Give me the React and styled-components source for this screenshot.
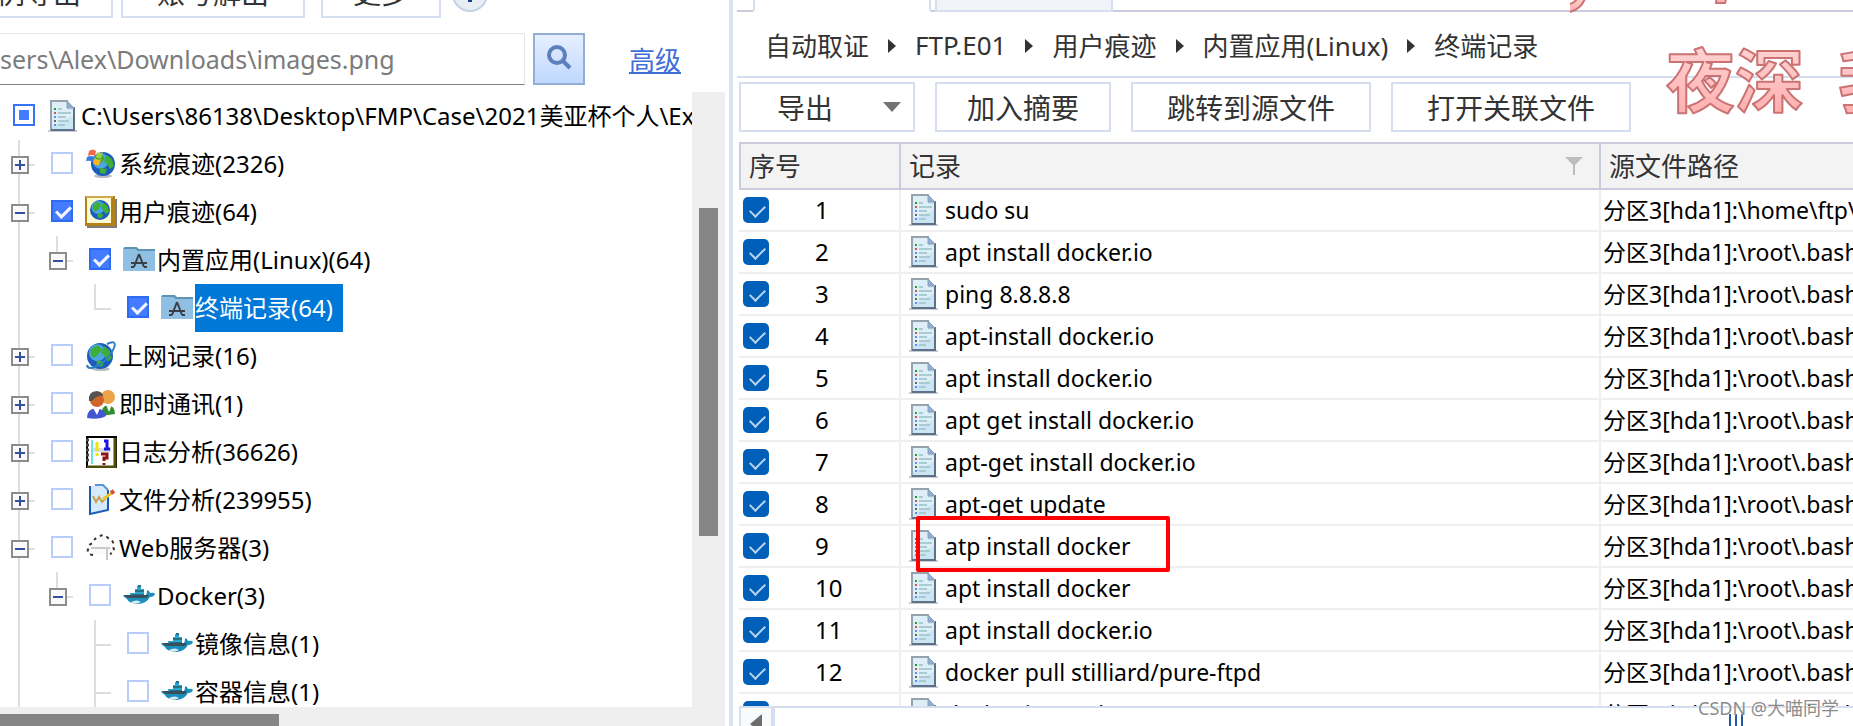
import { useState } from "react";
import styled, { createGlobalStyle, css } from "styled-components";

const tree = [
  { level: 0, label: "C:\\Users\\86138\\Desktop\\FMP\\Case\\2021美亚杯个人\\Ex", icon: "doc", state: "partial", cells: [] },
  { level: 1, label: "系统痕迹(2326)", icon: "windows", cells: ["plus"] },
  { level: 1, label: "用户痕迹(64)", icon: "user", state: "on", cells: ["minus"] },
  { level: 2, label: "内置应用(Linux)(64)", icon: "folder", state: "on", cells: ["line", "last-minus"] },
  { level: 3, label: "终端记录(64)", icon: "folder", state: "on", selected: true, cells: ["line", "", "end"] },
  { level: 1, label: "上网记录(16)", icon: "globe", cells: ["plus"] },
  { level: 1, label: "即时通讯(1)", icon: "people", cells: ["plus"] },
  { level: 1, label: "日志分析(36626)", icon: "log", cells: ["plus"] },
  { level: 1, label: "文件分析(239955)", icon: "file", cells: ["plus"] },
  { level: 1, label: "Web服务器(3)", icon: "cloud", cells: ["minus"] },
  { level: 2, label: "Docker(3)", icon: "docker", cells: ["line", "last-minus"] },
  { level: 3, label: "镜像信息(1)", icon: "docker", cells: ["line", "", "tee"] },
  { level: 3, label: "容器信息(1)", icon: "docker", cells: ["line", "", "tee"] },
];

const bash = "分区3[hda1]:\\root\\.bash_history";
const records = [
  { text: "sudo su", path: "分区3[hda1]:\\home\\ftp\\.bash_history" },
  { text: "apt install docker.io", path: bash },
  { text: "ping 8.8.8.8", path: bash },
  { text: "apt-install docker.io", path: bash },
  { text: "apt install docker.io", path: bash },
  { text: "apt get install docker.io", path: bash },
  { text: "apt-get install docker.io", path: bash },
  { text: "apt-get update", path: bash },
  { text: "atp install docker", path: bash, marked: true },
  { text: "apt install docker", path: bash },
  { text: "apt install docker.io", path: bash },
  { text: "docker pull stilliard/pure-ftpd", path: bash },
  { text: "docker image ls", path: bash },
];

const crumbs = ["自动取证", "FTP.E01", "用户痕迹", "内置应用(Linux)", "终端记录"];

function DocIcon() {
  return (
    <svg width="32" height="32" viewBox="0 0 32 32">
      <path d="M1 31H30" stroke="#c9ccd0" strokeWidth="2" />
      <path d="M4 1H21L27 8V31H4Z" fill="#cbe5f2" />
      <path d="M5 2H20V10H26V16L5 26Z" fill="#e2f1f8" opacity="0.8" />
      <path d="M4 31V1H21" fill="none" stroke="#96a2ad" strokeWidth="2" />
      <path d="M27 7V30H4" fill="none" stroke="#5d7288" strokeWidth="2" />
      <path d="M20 1V8H27Z" fill="#8fb0d6" stroke="#8ba0b5" />
      <path d="M11 9H15M11 13H24M11 17H19M11 21H22M11 25H18" stroke="#a9ccd2" strokeWidth="2" />
      <path d="M7 9H9" stroke="#22a022" strokeWidth="2" />
      <path d="M7 13H9" stroke="#cc5555" strokeWidth="2" />
      <path d="M7 17H9M7 25H9" stroke="#5a8cff" strokeWidth="2" />
      <path d="M7 21H9" stroke="#666" strokeWidth="2" />
    </svg>
  );
}

function Globe({ cx, cy, r }) {
  return (
    <g>
      <circle cx={cx} cy={cy} r={r} fill="#1c5cbc" />
      <circle cx={cx - r * 0.2} cy={cy - r * 0.25} r={r * 0.65} fill="#4ba6e2" />
      <path
        transform={`translate(${cx} ${cy}) scale(${r / 12})`}
        d="M-8 -7L-2 -10L2 -6L-2 -1L-6 2L-9 -2ZM4 -9L9 -5L11 2L7 5L4 0L1 -3ZM-3 4L4 5L2 10L-3 9Z"
        fill="#3fae38"
      />
    </g>
  );
}

function TreeIcon({ name }) {
  if (name === "doc") return <DocIcon />;
  return (
    <svg width="32" height="32" viewBox="0 0 32 32">
      {name === "windows" && (
        <>
          <ellipse cx="18" cy="28" rx="9" ry="2" fill="#b7bcc2" />
          <Globe cx={18} cy={16} r={12} />
          <path d="M4 3Q8 0 11 3L10 8Q7 6 3 8Z" fill="#ee6a4a" />
          <path d="M12 4Q15 6 18 4L16 10Q13 11 11 9Z" fill="#a5cf3c" />
          <path d="M2 9Q6 7 9 9L8 14Q5 12 1 13Z" fill="#3a7be0" />
          <path d="M10 10Q13 13 16 11L14 17Q11 18 8 15Z" fill="#ffb321" />
        </>
      )}
      {name === "user" && (
        <>
          <path d="M2 3H32V32H2Z" fill="#7d7d7d" />
          <path d="M0 0H30V30H0Z" fill="#b28219" />
          <path d="M2 2H26V27H2Z" fill="#fffbd0" />
          <path d="M1 1H28" stroke="#d0a850" strokeWidth="2" />
          <Globe cx={15} cy={14} r={10} />
        </>
      )}
      {name === "folder" && (
        <>
          <path d="M0 4H2V3H14L16 5H32V27H0Z" fill="#8fc0e4" />
          <path d="M1 4H13L15 6H32" fill="none" stroke="#5b93b0" strokeWidth="2" />
          <path d="M16 10L11 23M16 10L21 23M8 19H24" stroke="#3c3f44" strokeWidth="2" fill="none" />
          <path d="M8 23H11M21 23H24" stroke="#3c3f44" strokeWidth="2" />
        </>
      )}
      {name === "globe" && (
        <>
          <ellipse cx="16" cy="29" rx="9" ry="2" fill="#b7bcc2" />
          <Globe cx={15} cy={16} r={13} />
          <path d="M22 4Q32 -1 29 8Q25 18 14 25Q3 31 2 25" fill="none" stroke="#2a7fc4" strokeWidth="2" />
        </>
      )}
      {name === "people" && (
        <>
          <path d="M16 28Q16 18 23 17Q30 18 30 26Z" fill="#2f8d2b" />
          <path d="M21 17L24 24L27 17Z" fill="#f1f7ee" />
          <circle cx="23" cy="9" r="7" fill="#eda24a" />
          <path d="M2 30Q2 21 11 20Q20 21 21 28Q14 32 2 30Z" fill="#4257cf" />
          <path d="M8 20L12 27L15 20Z" fill="#fff" />
          <circle cx="12" cy="12" r="7" fill="#cf6428" />
          <path d="M4 13Q3 3 12 3Q18 4 18 8Q12 7 7 13Z" fill="#55524f" />
        </>
      )}
      {name === "log" && (
        <>
          <path d="M2 1H31V31H2Z" fill="#fff" stroke="#000" strokeWidth="2" />
          <path d="M30 2V31H2" fill="none" stroke="#4e4d09" strokeWidth="3" />
          <path d="M1 4H4M1 9H4M1 14H4M1 19H4M1 24H4" stroke="#444" strokeWidth="3" />
          <path d="M7 4V28" stroke="#6be3ea" strokeWidth="2" />
          <path d="M8 12H26V16H8Z" fill="#dcdcdc" />
          <path d="M12 6V15M12 17V20" stroke="#efe30a" strokeWidth="3" />
          <path d="M19 5H22V14M19 13H25" fill="none" stroke="#1717e4" strokeWidth="3" />
          <path d="M16 18H22V22H19V25M19 27V29" fill="none" stroke="#8c1414" strokeWidth="3" />
        </>
      )}
      {name === "file" && (
        <>
          <path d="M5 2L18 1L23 6V26L5 30Z" fill="#d5eafc" />
          <path d="M23 6V26L5 30V2" fill="none" stroke="#1e5bb6" strokeWidth="2" />
          <path d="M10 1H18L23 6" fill="none" stroke="#5d93d6" strokeWidth="2" />
          <path d="M8 12L11 18L14 13L17 18L21 14" fill="none" stroke="#c9a04a" strokeWidth="2" />
          <path d="M18 15L27 9" stroke="#efc62c" strokeWidth="3" />
          <path d="M26 9L29 7" stroke="#d94b3a" strokeWidth="4" />
        </>
      )}
      {name === "cloud" && (
        <>
          <path
            d="M8 23Q1 22 3 18Q2 13 8 11Q9 6 14 5Q18 1 23 6Q30 9 28 15Q31 20 25 22"
            fill="#fafafa"
            stroke="#333"
            strokeWidth="2"
            strokeDasharray="3 4"
          />
          <path d="M6 15H25V17H6ZM21 17H23V28H21Z" fill="#c9c9c9" />
        </>
      )}
      {name === "docker" && (
        <g transform="translate(0 4)">
          <path d="M7 9H12V5H14V2H18V5H21V13H7Z" fill="#2aa5cf" />
          <path d="M15 2H18M12 7H21M9 11H21" stroke="#2b6f86" strokeWidth="2" />
          <path d="M0 12H22Q24 11 24 6Q27 7 27 9Q31 8 32 10Q31 13 27 13Q23 20 15 20Q5 19 4 15Z" fill="#1b8fba" />
          <path d="M0 11H26L24 14H5Z" fill="#36515c" />
          <path d="M8 18Q12 21 18 18Q14 15 8 18Z" fill="#d5eef6" />
        </g>
      )}
    </svg>
  );
}

function TreeRow({ node }) {
  const [open, setOpen] = useState(true);
  return (
    <Row>
      {node.cells.map((kind, i) => (
        <Cell key={i} $kind={kind}>
          {(kind.includes("plus") || kind.includes("minus")) && (
            <Expander
              type="button"
              aria-label="展开"
              aria-expanded={open}
              $plus={kind === "plus"}
              onClick={() => setOpen(!open)}
            />
          )}
        </Cell>
      ))}
      <TreeLabel>
        <TreeCheck type="checkbox" defaultChecked={node.state === "on"} $partial={node.state === "partial"} />
        <TreeIcon name={node.icon} />
        <NodeText $selected={node.selected}>{node.label}</NodeText>
      </TreeLabel>
    </Row>
  );
}

export default function App() {
  return (
    <>
      <Global />
      <Page>
        <Side>
          <SideTools>
            <CutButton type="button" $size="first">案例导出</CutButton>
            <CutButton type="button" $size="wide">账号解出</CutButton>
            <CutButton type="button">更多</CutButton>
            <Help type="button" aria-label="帮助">
              <svg width="36" height="36" viewBox="0 0 36 36"><path d="M16 8H20V26H16Z" fill="#17408b" /></svg>
            </Help>
          </SideTools>
          <Search>
            <PathInput aria-label="路径" defaultValue="sers\Alex\Downloads\images.png" />
            <SearchButton type="button" aria-label="搜索">
              <svg width="28" height="28" viewBox="0 0 28 28" fill="none" stroke="#5b80bb">
                <circle cx="12" cy="10" r="8" strokeWidth="4" />
                <path d="M18 16L25 23" strokeWidth="4" />
              </svg>
            </SearchButton>
            <Advanced href="#advanced">高级</Advanced>
          </Search>
          <TreeArea>
            <Tree>
              {tree.map((node) => (
                <TreeRow key={node.label} node={node} />
              ))}
            </Tree>
            <TrackV><ThumbV /></TrackV>
          </TreeArea>
          <TrackH><ThumbH /></TrackH>
        </Side>

        <Main>
          <Tabs>
            <TabEdge />
            <Tab type="button" aria-label="终端记录" $active />
            <TabEdge />
            <Tab type="button" aria-label="其他" />
            <TabFill />
          </Tabs>
          <Crumbs>
            {crumbs.map((c, i) => (
              <Crumb key={c}>
                {i > 0 && <svg width="8" height="14" viewBox="0 0 8 14"><path d="M0 0L8 7L0 14Z" fill="#333" /></svg>}
                <span>{c}</span>
              </Crumb>
            ))}
          </Crumbs>
          <Actions>
            <ActionButton type="button" $menu>
              导出
              <svg width="18" height="10" viewBox="0 0 18 10"><path d="M0 0H18L9 10Z" fill="#737373" /></svg>
            </ActionButton>
            <ActionButton type="button">加入摘要</ActionButton>
            <ActionButton type="button" $wide>跳转到源文件</ActionButton>
            <ActionButton type="button" $wide>打开关联文件</ActionButton>
          </Actions>
          <Grid>
            <Table>
              <colgroup>
                <NumCol />
                <TextCol />
                <col />
              </colgroup>
              <thead>
                <tr>
                  <th>序号</th>
                  <th>
                    <HeadCell>
                      记录
                      <svg width="18" height="18" viewBox="0 0 18 18"><path d="M0 0H18L10 8V18H8V8Z" fill="#bdbdbd" /></svg>
                    </HeadCell>
                  </th>
                  <th>源文件路径</th>
                </tr>
              </thead>
              <tbody>
                {records.map((r, i) => (
                  <tr key={i}>
                    <td>
                      <NumCell>
                        <RowCheck type="checkbox" defaultChecked />
                        {i + 1}
                      </NumCell>
                    </td>
                    <td>
                      <RecordCell>
                        <DocIcon />
                        {r.text}
                        {r.marked && <Mark />}
                      </RecordCell>
                    </td>
                    <td>{r.path}</td>
                  </tr>
                ))}
              </tbody>
            </Table>
          </Grid>
          <BottomBar>
            <ScrollLeft type="button" aria-label="向左">
              <svg width="12" height="20" viewBox="0 0 12 20"><path d="M12 0V20L0 10Z" fill="#6d6d6d" /></svg>
            </ScrollLeft>
            <Grip><i /><i /><i /></Grip>
          </BottomBar>
        </Main>
        <Lyric aria-hidden="true">
          <svg width="283" height="130" viewBox="0 0 283 130">
            <defs>
              <linearGradient id="pink" x1="0" y1="0" x2="0" y2="1">
                <stop offset="0" stopColor="#ffd9d9" />
                <stop offset="1" stopColor="#ffa9a9" />
              </linearGradient>
            </defs>
            <g fill="url(#pink)" stroke="#cb7272" strokeWidth="2">
              <path d="M0 4Q6 2 9 -4H16Q12 9 0 12" />
              <path d="M147 -4L146 3H155L157 -4Z" />
              <text x="96" y="107">夜深</text>
              <text x="268" y="107">我</text>
            </g>
          </svg>
        </Lyric>
        <Credit>CSDN @大喵同学</Credit>
      </Page>
    </>
  );
}

const Global = createGlobalStyle`
  * { box-sizing: border-box; }
  body {
    margin: 0;
    background: #fff;
    font-family: "Noto Sans", "Noto Sans CJK SC", sans-serif;
    font-size: 24px;
    color: #000;
  }
  button, input { font-family: inherit; margin: 0; padding: 0; }
  svg { flex: none; display: block; }
`;

const Page = styled.div`
  position: relative;
  display: grid;
  grid-template-columns: 729fr 1124fr;
  height: 100vh;
  overflow: hidden;
`;

const Side = styled.aside`
  display: flex;
  flex-direction: column;
  min-width: 0;
  min-height: 0;
`;

const SideTools = styled.div`
  display: flex;
  align-items: flex-end;
  height: 18px;
  flex: none;
`;

const CutButton = styled.button`
  flex: none;
  width: 120px;
  height: 50px;
  margin-right: 16px;
  border: 2px solid #d6dff0;
  background: #fff;
  font-size: 28px;
  line-height: 44px;
  color: #333;
  ${({ $size }) => $size === "wide" && css`width: 184px;`}
  ${({ $size }) => $size === "first" && css`
    width: 176px;
    margin-left: -63px;
    margin-right: 8px;
  `}
`;

const Help = styled.button`
  align-self: flex-end;
  width: 36px;
  height: 36px;
  margin: 0 0 6px -5px;
  border: 2px solid #c3d3e6;
  border-radius: 50%;
  background: #e9eef5;
  display: flex;
  align-items: center;
  justify-content: center;
`;

const Search = styled.div`
  display: flex;
  align-items: center;
  height: 68px;
  margin: 6px 48px 0 0;
  padding-top: 2px;
  flex: none;
  gap: 8px;
`;

const PathInput = styled.input`
  flex: 1;
  min-width: 0;
  height: 52px;
  border: 1px solid #e6e6e6;
  border-left: 0;
  border-bottom-color: #7f7f7f;
  font-size: 25px;
  color: #7b7b7b;
`;

const SearchButton = styled.button`
  width: 52px;
  height: 52px;
  border: 2px solid #93aed3;
  background: linear-gradient(#e6efff, #c0d8ff);
  display: flex;
  align-items: center;
  justify-content: center;
`;

const Advanced = styled.a`
  margin-left: 36px;
  font-size: 26px;
  color: #3f6fd8;
  text-underline-offset: 2px;
`;

const TreeArea = styled.div`
  flex: 1;
  min-height: 0;
  display: flex;
  margin-right: 4px;
`;

const Tree = styled.div`
  flex: 1;
  min-width: 0;
  overflow: hidden;
`;

const Row = styled.div`
  display: flex;
  height: 48px;
`;

const line = "linear-gradient(#dedede, #dedede) no-repeat";

const Cell = styled.div`
  flex: none;
  width: 38px;
  padding: 16px 0 0 11px;
  background: ${({ $kind }) => {
    if ($kind === "plus" || $kind === "minus") return `${line} 18px 0 / 2px 48px, ${line} 18px 24px / 17px 2px`;
    if ($kind === "last-minus") return `${line} 18px 0 / 2px 24px, ${line} 18px 24px / 17px 2px`;
    if ($kind === "line") return `${line} 18px 0 / 2px 48px`;
    if ($kind === "tee") return `${line} 18px 0 / 2px 48px, ${line} 18px 24px / 17px 2px`;
    if ($kind === "end") return `${line} 18px 0 / 2px 25px, ${line} 18px 24px / 17px 2px`;
    return "none";
  }};
`;

const bar = "linear-gradient(#34509c, #34509c) no-repeat center";

const Expander = styled.button`
  display: block;
  width: 18px;
  height: 18px;
  border: 2px solid #8c8c8c;
  background: ${({ $plus }) => ($plus ? `${bar} / 2px 10px, ` : "")}${bar} / 10px 2px, #fafafa;
`;

const TreeLabel = styled.label`
  display: flex;
  align-items: center;
  padding-left: 13px;
  white-space: nowrap;
`;

const TreeCheck = styled.input`
  appearance: none;
  flex: none;
  width: 22px;
  height: 22px;
  margin: 0 12px 2px 0;
  border: 2px solid ${({ $partial }) => ($partial ? "#3573f6" : "#b9cdfb")};
  background: ${({ $partial }) => ($partial ? "linear-gradient(#447bff, #447bff) no-repeat center / 10px 10px" : "#fff")};
  &:checked {
    border-color: #2d6bf0;
    background: #447bff;
  }
  &:checked::after {
    content: "";
    display: block;
    width: 12px;
    height: 6px;
    margin: 4px 0 0 3px;
    border: solid #f2f6ff;
    border-width: 0 0 3px 3px;
    transform: rotate(-45deg);
  }
`;

const NodeText = styled.span`
  line-height: 48px;
  margin-left: 2px;
  padding-right: 10px;
  ${({ $selected }) => $selected && css`
    background: #0078d7;
    color: #fff;
  `}
`;

const TrackV = styled.div`
  flex: none;
  width: 33px;
  padding: 116px 7px 0;
  background: #efefef;
`;

const ThumbV = styled.div`
  height: 328px;
  background: #868686;
`;

const TrackH = styled.div`
  flex: none;
  height: 19px;
  margin-right: 4px;
  padding-top: 7px;
  background: #efefef;
`;

const ThumbH = styled.div`
  width: 279px;
  height: 12px;
  background: #868686;
`;

const Main = styled.main`
  display: flex;
  flex-direction: column;
  min-width: 0;
  min-height: 0;
  border-left: 4px solid #d9e2f3;
  padding-left: 4px;
`;

const Tabs = styled.div`
  display: flex;
  flex: none;
  height: 12px;
`;

const TabEdge = styled.div`
  width: 16px;
  border-bottom: 2px solid #cacbdd;
`;

const Tab = styled.button`
  width: 178px;
  height: 12px;
  border: 2px solid #d6dff0;
  border-top: 0;
  background: #f0f3f8;
  & + ${TabEdge} { width: 4px; }
  ${({ $active }) => $active && css`
    background: #fff;
    border-bottom-color: #fff;
  `}
`;

const TabFill = styled.div`
  flex: 1;
  border-bottom: 2px solid #cacbdd;
`;

const Crumbs = styled.nav`
  display: flex;
  align-items: center;
  flex: none;
  height: 66px;
  padding: 4px 0 2px 28px;
  border-bottom: 2px solid #d6dff0;
  font-size: 26px;
  color: #333;
  white-space: nowrap;
`;

const Crumb = styled.span`
  display: flex;
  align-items: center;
  svg { margin: 2px 19px 0; }
`;

const Actions = styled.div`
  display: flex;
  flex: none;
  gap: 20px;
  padding: 4px 0 10px 2px;
`;

const ActionButton = styled.button`
  display: flex;
  align-items: center;
  justify-content: center;
  width: ${({ $wide }) => ($wide ? "240px" : "176px")};
  height: 50px;
  border: 2px solid #d6dff0;
  background: #fff;
  font-size: 28px;
  color: #333;
  ${({ $menu }) => $menu && css`
    justify-content: space-between;
    padding: 0 12px 0 36px;
  `}
`;

const Grid = styled.div`
  flex: 1;
  min-height: 0;
  margin: 0 -2px 0 2px;
  overflow: hidden;
`;

const Table = styled.table`
  width: 100%;
  table-layout: fixed;
  border-collapse: separate;
  border-spacing: 0;
  font-size: 23px;
  th {
    height: 48px;
    padding: 0 0 0 8px;
    border: solid #cacbdd;
    border-width: 2px 2px 2px 0;
    background: #f3f3f3;
    font-size: 26px;
    line-height: 36px;
    font-weight: 400;
    text-align: left;
    color: #333;
  }
  th:first-child {
    border-left-width: 2px;
  }
  td {
    height: 42px;
    padding: 0 0 0 2px;
    border: solid #efefef;
    border-width: 0 2px 2px 0;
    line-height: 36px;
    white-space: nowrap;
    overflow: hidden;
  }
  td:nth-child(2) {
    overflow: visible;
  }
`;

const NumCol = styled.col`
  width: 162px;
`;

const TextCol = styled.col`
  width: 700px;
`;

const HeadCell = styled.div`
  display: flex;
  align-items: center;
  justify-content: space-between;
  padding-right: 16px;
`;

const NumCell = styled.label`
  display: flex;
  align-items: center;
  gap: 46px;
  padding-left: 2px;
  font-size: 24px;
`;

const RowCheck = styled.input`
  appearance: none;
  flex: none;
  width: 26px;
  height: 26px;
  border-radius: 5px;
  background: #c8c8c8;
  &:checked { background: #005fb8; }
  &:checked::after {
    content: "";
    display: block;
    width: 13px;
    height: 7px;
    margin: 8px 0 0 7px;
    border: solid #b9d4ee;
    border-width: 0 0 2px 2px;
    transform: rotate(-45deg);
  }
`;

const RecordCell = styled.div`
  position: relative;
  display: flex;
  align-items: center;
  gap: 5px;
  padding-left: 5px;
`;

const Mark = styled.span`
  position: absolute;
  left: 13px;
  top: -12px;
  width: 254px;
  height: 56px;
  border: 4px solid #fd0000;
  border-radius: 2px;
  z-index: 1;
`;

const BottomBar = styled.div`
  display: flex;
  flex: none;
  height: 20px;
  margin-left: 2px;
  border-top: 2px solid #d6dff0;
`;

const ScrollLeft = styled.button`
  width: 36px;
  border: solid #d6dff0;
  border-width: 0 4px 0 2px;
  background: #f9fafc;
  overflow: hidden;
  svg { margin: 6px 0 0 9px; }
`;

const Grip = styled.div`
  display: flex;
  gap: 4px;
  margin: 6px 110px 0 auto;
  i {
    width: 2px;
    background: #2058a4;
  }
`;

const Lyric = styled.div`
  position: absolute;
  top: 0;
  right: 0;
  pointer-events: none;
  text {
    font-size: 69px;
    font-weight: 700;
    stroke-linejoin: round;
  }
`;

const Credit = styled.div`
  position: absolute;
  right: 14px;
  bottom: 4px;
  font-size: 18px;
  line-height: 28px;
  color: #8c8c8c;
  text-shadow: 0 0 2px #fff;
`;
